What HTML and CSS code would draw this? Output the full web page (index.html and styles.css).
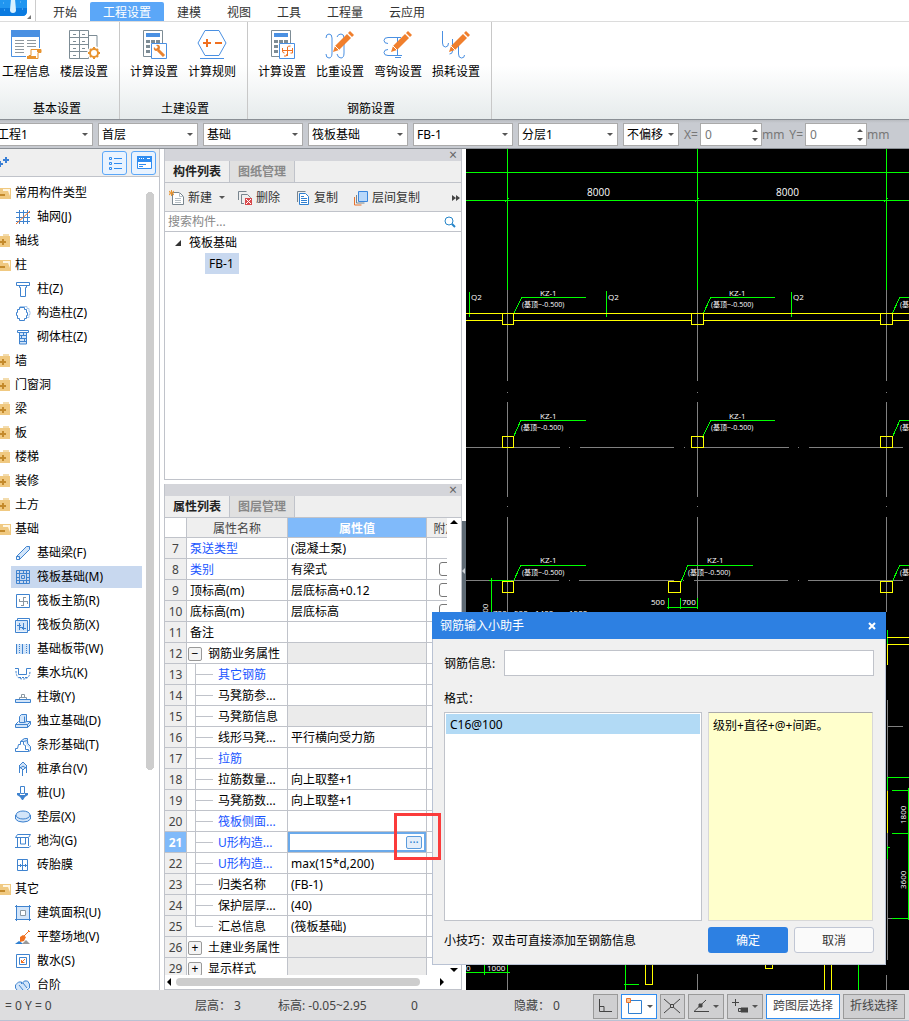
FILE: index.html
```html
<!DOCTYPE html>
<html lang="zh-CN">
<head>
    <meta charset="UTF-8">
    <meta name="viewport" content="width=device-width, initial-scale=1.0">
    <title>钢筋输入小助手</title>
    <link rel="stylesheet" href="styles.css">
</head>
<body>
    <!-- Shared icons -->
    <svg class="sprite" aria-hidden="true">
        <symbol id="folder" viewBox="0 0 16 16">
            <path d="M8 1h6v2H8z" fill="#f3dcae"/>
            <path d="M1 3h14v11H1z" fill="#f0c981"/>
            <path d="M5 9h6M8 6v6" stroke="#c48a2c" stroke-width="2"/>
        </symbol>
        <symbol id="folder-open" viewBox="0 0 16 16">
            <path d="M1 3h15v11H1z" fill="#f0c981"/>
            <path d="M8 4h7v7l-2-5H8z" fill="#fff6e2"/>
            <path d="M4 10h6" stroke="#c48a2c" stroke-width="2"/>
        </symbol>
        <symbol id="calc" viewBox="0 0 32 32">
            <path d="M5.500 2.500h19v26h-19z" fill="#fff" stroke="#7d8c95"/>
            <path d="M8 5h14v4H8z" fill="#4a90e2"/>
            <path d="M8 12h4v3H8zm5 0h4v3h-4zm5 0h4v3h-4zM8 17h4v3H8zm5 0h4v3h-4zM8 22h4v3H8z" fill="#7d8c95"/>
            <path d="M13.500 15.500h15v15h-15z" fill="#fff" stroke="#4a90e2"/>
        </symbol>
        <symbol id="pencil" viewBox="0 0 32 32">
            <path d="M9 24l2-6 12-12 4 4-12 12z" fill="#f07f2d"/>
            <path d="M24 5l2-2 4 4-2 2z" fill="#f07f2d"/>
            <path d="M11 18l4 4" stroke="#fff"/>
        </symbol>
    </svg>

    <nav class="menu">
        <span class="logo">
            <svg width="36" height="22" viewBox="0 0 36 22">
                <path d="M0 0h27v12q0 5-5 5H0z" fill="#2196f0"/>
                <path d="M0 9h27v3q0 5-5 5H0z" fill="#0b7be0"/>
                <path d="M11 0h4l1 11q0 3-3 3t-3-3z" fill="#d8f1ff"/>
                <path d="M3 4h1M20 3h1M22 10h1M4 11h1" stroke="#7fc8ff" stroke-width="1"/>
                <path d="M27 20h4v-4z" fill="#777"/>
            </svg>
        </span>
        <button class="menu-tab">开始</button>
        <button class="menu-tab active">工程设置</button>
        <button class="menu-tab">建模</button>
        <button class="menu-tab">视图</button>
        <button class="menu-tab">工具</button>
        <button class="menu-tab">工程量</button>
        <button class="menu-tab">云应用</button>
    </nav>

    <header class="ribbon">
        <section class="ribbon-group">
            <div class="ribbon-buttons">
                <button class="ribbon-btn">
                    <svg width="32" height="32" viewBox="0 0 32 32" fill="none">
                        <path d="M1.500 3.500h28v25h-28z" fill="#fff" stroke="#4a90e2"/>
                        <path d="M1 2h29v7H1z" fill="#4a90e2"/>
                        <path d="M5 12.500h9M5 15.500h9M5 18.500h9M5 21.500h9M5 24.500h9M17 12.500h9M17 15.500h9M17 18.500h9" stroke="#8d979e"/>
                        <path d="M18 20h14v12H16v-4h2z" fill="#fff"/>
                        <path d="M21 21.500h10v3h-3v6H18l1-3h2z" stroke="#e8932f"/>
                        <path d="M17 28h9v3h-9zM27 21h4v3h-4z" fill="#e8932f"/>
                    </svg>
                    工程信息
                </button>
                <button class="ribbon-btn">
                    <svg width="32" height="32" viewBox="0 0 32 32" fill="none">
                        <path d="M1.500 2.500h19v28h-19zM11.500 2v28M1 9.500h19M1 16.500h19M1 23.500h19M21 7.500h8v16" stroke="#7d8c95"/>
                        <path d="M5 6.500h3M14 6.500h3M5 13.500h3M14 13.500h3M5 20.500h3M14 20.500h3M5 27.500h3" stroke="#7d8c95"/>
                        <circle cx="26" cy="25" r="7" fill="#fff"/>
                        <circle cx="26" cy="25" r="4" stroke="#e8932f" stroke-width="2"/>
                        <path d="M26 19v2M26 29v2M20 25h2M30 25h2M22 21l1 1M29 28l1 1M30 21l-1 1M22 29l1-1" stroke="#e8932f" stroke-width="2"/>
                    </svg>
                    楼层设置
                </button>
            </div>
            <h2>基本设置</h2>
        </section>
        <section class="ribbon-group">
            <div class="ribbon-buttons">
                <button class="ribbon-btn">
                    <svg width="32" height="32" viewBox="0 0 32 32" fill="none">
                        <use href="#calc"/>
                        <path d="M20 22l6 6" stroke="#e8832f" stroke-width="3"/>
                        <path d="M16 19l2 2 2-2-2-2q4-1 4 3-1 3-4 3-3-1-2-4z" fill="#e8832f"/>
                    </svg>
                    计算设置
                </button>
                <button class="ribbon-btn">
                    <svg width="32" height="32" viewBox="0 0 32 32" fill="none">
                        <path d="M9 2.500h14l7 12.500-7 12.500H9L2 15z" fill="#fff" stroke="#4a90e2"/>
                        <path d="M4 30.500h24" stroke="#4a90e2"/>
                        <path d="M7 15h8M11 11v8M19 15h7" stroke="#f07020" stroke-width="2"/>
                    </svg>
                    计算规则
                </button>
            </div>
            <h2>土建设置</h2>
        </section>
        <section class="ribbon-group">
            <div class="ribbon-buttons">
                <button class="ribbon-btn">
                    <svg width="32" height="32" viewBox="0 0 32 32" fill="none">
                        <use href="#calc"/>
                        <path d="M21.500 28V19q0-1 3-1M16 22.500h11M18 28q3 1 3-2M16.500 20v3q0 2 2 2M26.500 20v5h-2" stroke="#f07020"/>
                    </svg>
                    计算设置
                </button>
                <button class="ribbon-btn">
                    <svg width="32" height="32" viewBox="0 0 32 32" fill="none">
                        <path d="M2 10q0-4 3-4t3 4v15q0 5-3 5t-3-4M13 9q1-3 4-3t3 4v15q0 5-3 5t-4-4" stroke="#4a90e2"/>
                        <use href="#pencil"/>
                    </svg>
                    比重设置
                </button>
                <button class="ribbon-btn">
                    <svg width="32" height="32" viewBox="0 0 32 32" fill="none">
                        <path d="M19 9.500H6q-4 0-4 3t4 3M20 27.500H6q-4 0-4-3t4-3M15.500 9v18M13 29.500h6" stroke="#4a90e2"/>
                        <use href="#pencil"/>
                    </svg>
                    弯钩设置
                </button>
                <button class="ribbon-btn">
                    <svg width="32" height="32" viewBox="0 0 32 32" fill="none">
                        <path d="M2.500 3v12q0 4 3 4t3-4M12.500 11v12q0 3-3 3M18.500 17v9q0 4 3 4t3-3" stroke="#4a90e2"/>
                        <use href="#pencil"/>
                    </svg>
                    损耗设置
                </button>
            </div>
            <h2>钢筋设置</h2>
        </section>
    </header>

    <div class="options">
        <select aria-label="工程"><option>工程1</option></select>
        <select aria-label="楼层"><option>首层</option></select>
        <select aria-label="构件大类"><option>基础</option></select>
        <select aria-label="构件类型"><option>筏板基础</option></select>
        <select aria-label="构件"><option>FB-1</option></select>
        <select aria-label="分层"><option>分层1</option></select>
        <select class="offset" aria-label="偏移"><option>不偏移</option></select>
        <label class="axis">X=<input type="number" value="0">mm</label>
        <label class="axis">Y=<input type="number" value="0">mm</label>
    </div>

    <main class="workspace">
        <aside class="sidebar">
            <div class="sidebar-tools">
                <svg class="pluses" width="10" height="14" viewBox="0 0 10 14">
                    <path d="M3 4h6M6 1v6M-2 8h5M0 5v6" stroke="#3a7fd5" stroke-width="2"/>
                </svg>
                <button class="view-btn" aria-label="列表">
                    <svg width="16" height="16" viewBox="0 0 16 16" fill="none" stroke="#2f8cf0">
                        <path d="M2.500 2.500h2v2h-2zM2.500 7.500h2v2h-2zM2.500 12.500h2v2h-2zM7 3.500h8M7 8.500h8M7 13.500h8"/>
                    </svg>
                </button>
                <button class="view-btn" aria-label="面板">
                    <svg width="16" height="16" viewBox="0 0 16 16" fill="none">
                        <path d="M1 2h15v12H1z" fill="#fff"/>
                        <path d="M1.500 2.500h14v11h-14zM3 9.500h7M3 11.500h4" stroke="#2f8cf0"/>
                        <path d="M1 1h15v6H1z" fill="#2f8cf0"/>
                        <path d="M3 3.500h1M5 3.500h1M7 3.500h1M11 3.500h3" stroke="#fff"/>
                    </svg>
                </button>
            </div>
            <ul class="types">
                <li class="group"><svg><use href="#folder-open"/></svg>常用构件类型</li>
                <li><svg viewBox="0 0 16 16"><path d="M1 3.500h14M1 8.500h14M1 12.500h14M4.500 1v14M8.500 1v14M12.500 1v14"/><path d="M1 15L15 2" class="orange"/></svg>轴网(J)</li>
                <li class="group"><svg><use href="#folder"/></svg>轴线</li>
                <li class="group"><svg><use href="#folder-open"/></svg>柱</li>
                <li><svg viewBox="0 0 16 16"><path d="M1.500 1.500h13v3h-13zM4.500 4.500v2h1v9h5v-9h1v-2"/></svg>柱(Z)</li>
                <li><svg viewBox="0 0 16 16"><path d="M5 3.500V1.500h7v2h2v3h1v3h-1v3h-2" class="soft"/><path d="M4.500 2.500h5v2h2v3h1v3h-1v3h-2v2h-5v-2h-2v-3h-1v-3h1v-3h2z"/></svg>构造柱(Z)</li>
                <li><svg viewBox="0 0 16 16"><path d="M4 4h8v11H4z" class="fill"/><path d="M2.500 1.500h11v2h-11zM4.500 4v11h7V4M5 6.500h7M5 9.500h7M5 12.500h7M8.500 4v2M6.500 7v2M9.500 10v2"/></svg>砌体柱(Z)</li>
                <li class="group"><svg><use href="#folder"/></svg>墙</li>
                <li class="group"><svg><use href="#folder"/></svg>门窗洞</li>
                <li class="group"><svg><use href="#folder"/></svg>梁</li>
                <li class="group"><svg><use href="#folder"/></svg>板</li>
                <li class="group"><svg><use href="#folder"/></svg>楼梯</li>
                <li class="group"><svg><use href="#folder"/></svg>装修</li>
                <li class="group"><svg><use href="#folder"/></svg>土方</li>
                <li class="group"><svg><use href="#folder-open"/></svg>基础</li>
                <li><svg viewBox="0 0 16 16"><path d="M1.500 11.500l10-10h3v3l-10 10z" class="fill"/><path d="M1.500 11.500l10-10h3v3l-10 10h-3zM1.500 11.500h3v3"/></svg>基础梁(F)</li>
                <li class="selected"><svg viewBox="0 0 16 16"><path d="M1.500 1.500h13v13h-13zM1 4.500h14M1 11.500h14M4.500 1v14M11.500 1v14M6.500 6.500h3v3h-3z"/><path d="M8.500 1v3M8.500 12v3M1 8.500h3M12 8.500h3"/></svg>筏板基础(M)</li>
                <li><svg viewBox="0 0 16 16"><path d="M1.500 1.500h13v13h-13z"/><path d="M8.500 4v8M4 8.500h9M8 4.500h3M9 12.500H6M4.500 9V6M12.500 8v3" class="grey"/></svg>筏板主筋(R)</li>
                <li><svg viewBox="0 0 16 16"><path d="M1.500 3.500h11v11h-11z" class="fill"/><path d="M.5 3.500h12v12H.5zM2.500 3V1.500h12v12H13M4.500 6v7M8.500 6v7M2 8.500h4M7 11.500h4M4 10.500h5"/></svg>筏板负筋(X)</li>
                <li><svg viewBox="0 0 16 16"><path d="M2 3h12v10H2z" class="fill"/><path d="M1.500 3v10M14.500 3v10M7.500 3v10"/><path d="M4.500 3v10M11.500 3v10" stroke-dasharray="1 1"/></svg>基础板带(W)</li>
                <li><svg viewBox="0 0 16 16"><path d="M0 3.500h3.500v6h8v-6H16"/><path d="M1 6q0 8 7 8t7-8M4 12.500h8" stroke-dasharray="2 1"/></svg>集水坑(K)</li>
                <li><svg viewBox="0 0 16 16"><path d="M.5 10.500h15v3H.5z" class="fill"/><path d="M.5 10.500h15v3H.5z"/><path d="M4.500 10V8.500h7V10M6.500 8V5.500h3V8" class="grey"/></svg>柱墩(Y)</li>
                <li><svg viewBox="0 0 16 16"><path d="M5 2l2-1h5v7l3 2v3l-2 2H1v-4l4-1z" class="fill"/><path d="M4.500 3.500l2-2h5v7l-2 1h-5zM9.500 3.500v6M.5 11.500h12v3H.5zM.5 11.500l3-3M12.500 11.500l3-3v3l-3 3M11.500 8.500h4"/></svg>独立基础(D)</li>
                <li><svg viewBox="0 0 16 16"><path d="M5 4l4-3h3l3 8v3l-3-3-3-5z" class="fill"/><path d="M.5 14.500v-3h2l1-4h2v-3h3v3l2 1v4h3v2zM5.500 4.500l4-3h3v2l-4 1M12.500 3.500v3l3 3v4l-2 1"/></svg>条形基础(T)</li>
                <li><svg viewBox="0 0 16 16"><path d="M8 1l4 4-4 4-4-4z" class="fill"/><path d="M8 1l4 4-4 4-4-4zM7.500 9v6M4.500 6v6M11.500 6v6M4 8l4-3 4 3"/></svg>桩承台(V)</li>
                <li><svg viewBox="0 0 16 16"><path d="M5.500 1.500h4v7h-4z"/><path d="M2 8h3v2h5V8h3v2l-3 2-2 3H7l-2-3-3-2z" fill="#3f83cf" stroke="none"/></svg>桩(U)</li>
                <li><svg viewBox="0 0 16 16"><path d="M.5 6.500v3q1 4 7.500 4t7.500-4v-3" class="fill"/><ellipse cx="8" cy="6" rx="7" ry="4" class="fill"/><ellipse cx="8" cy="6" rx="7" ry="4"/><path d="M.5 6v4q2 3 7.500 3t7.500-3V6"/></svg>垫层(X)</li>
                <li><svg viewBox="0 0 16 16"><path d="M.5 4.500l2-3h13l-2 3zM2.500 5v9M5.500 5v6h5V5M13.500 5v8M0 14.500h14l2-2"/></svg>地沟(G)</li>
                <li><svg viewBox="0 0 16 16"><path d="M2.500 2.500h10v11h-10zM2 8.500h11M7.500 2v11M5.500 7v3M10.500 7v3"/></svg>砖胎膜</li>
                <li class="group"><svg><use href="#folder-open"/></svg>其它</li>
                <li><svg viewBox="0 0 16 16"><path d="M2 2h12v12H2z" class="fill"/><path d="M1.500 0v16M14.500 0v16M0 1.500h16M0 14.500h16"/><path d="M5.500 5.500h5v5h-5z" class="grey" fill="#fff"/></svg>建筑面积(U)</li>
                <li><svg viewBox="0 0 16 16"><path d="M0 15l4-3 3 2 1 1z" fill="#2f7fd0" stroke="none"/><path d="M7 15l4-4 4 4z" fill="#999" stroke="none"/><path d="M5 8l3-2 3 2-2 4-4 1z" fill="#f07020" stroke="none"/><path d="M9 7l5-5M13 1l2 2" class="orange"/></svg>平整场地(V)</li>
                <li><svg viewBox="0 0 16 16"><path d="M1.500 1.500h13v13h-13zM4.500 4.500h7v7h-7z"/><path d="M10 6l-4 4M6.500 7v2.500h3" class="orange"/></svg>散水(S)</li>
                <li><svg viewBox="0 0 16 16"><path d="M1 8l3-3h3l3-2 4 3v4l-5 4H3l-2-3z" class="fill"/><path d="M.5 11V8l3-3h3v2l3-3h3l2 3v4l-5 4h-6zM4 8l4 5M8 6l4 5"/></svg>台阶</li>
            </ul>
        </aside>

        <div class="panels">
            <section class="panel components">
                <div class="panel-title"><button aria-label="关闭">×</button></div>
                <div class="panel-tabs">
                    <button class="active">构件列表</button>
                    <button>图纸管理</button>
                </div>
                <div class="panel-tools">
                    <button class="drop">
                        <svg width="16" height="16" viewBox="0 0 16 16" fill="none"><path d="M3.500 2.500h7l4 4v8h-11z" fill="#fff" stroke="#78858e"/><path d="M10.500 2v4.500h4M6 8.500h6M6 10.500h6M6 12.500h6" stroke="#b5bec4"/><path d="M0 1l5 4M5 1L0 5M2.500 0v6M0 3h5" stroke="#e8932f"/></svg>
                        新建
                    </button>
                    <button>
                        <svg width="16" height="16" viewBox="0 0 16 16" fill="none"><path d="M1.500 10V1.500h8M4.500 13V4.500h6l3 3V9M4 13.500h3" stroke="#78858e"/><path d="M8 8h7v7H8z" fill="#d8494c"/><path d="M9 9l5 5M14 9l-5 5" stroke="#fff"/></svg>
                        删除
                    </button>
                    <button>
                        <svg width="16" height="16" viewBox="0 0 16 16" fill="none"><path d="M2.500 12V1.500h8" stroke="#78858e"/><path d="M4.500 3.500h6l3 3v8h-9z" fill="#fff" stroke="#2f7fd0"/><path d="M6 6.500h3M6 8.500h6M6 10.500h6M6 12.500h6" stroke="#2f7fd0"/></svg>
                        复制
                    </button>
                    <button>
                        <svg width="16" height="16" viewBox="0 0 16 16" fill="none"><path d="M1.500 7v8h7" stroke="#e8732f"/><path d="M3.500 5v8h8" stroke="#78858e"/><path d="M5.500 1.500h9v10h-9z" fill="#b9d8fa" stroke="#3a86dd"/></svg>
                        层间复制
                    </button>
                    <span class="more"><svg width="8" height="8" viewBox="0 0 8 8"><path d="M0 1l4 3-4 3zM4 1l4 3-4 3z" fill="#444"/></svg></span>
                </div>
                <label class="search">
                    <input type="text" placeholder="搜索构件..." aria-label="搜索构件">
                    <svg width="12" height="12" viewBox="0 0 12 12" fill="none" stroke="#2585c9"><circle cx="5" cy="5" r="4"/><path d="M8 8l3 3" stroke-width="2"/></svg>
                </label>
                <div class="tree">
                    <div class="tree-root"><svg width="8" height="8" viewBox="0 0 8 8"><path d="M7 1v6H1z" fill="#333"/></svg>筏板基础</div>
                    <div class="tree-leaf">FB-1</div>
                </div>
            </section>

            <section class="panel properties">
                <div class="panel-title"><button aria-label="关闭">×</button></div>
                <div class="panel-tabs">
                    <button class="active">属性列表</button>
                    <button>图层管理</button>
                </div>
                <div class="table-area">
                    <div class="table-clip">
                        <table>
                            <thead>
                                <tr><th class="num"></th><th class="name">属性名称</th><th class="value">属性值</th><th class="extra">附加</th></tr>
                            </thead>
                            <tbody>
                                <tr><th>7</th><td class="blue">泵送类型</td><td>(混凝土泵)</td><td></td></tr>
                                <tr><th>8</th><td class="blue">类别</td><td>有梁式</td><td class="check"><input type="checkbox" aria-label="附加 类别"></td></tr>
                                <tr><th>9</th><td>顶标高(m)</td><td>层底标高+0.12</td><td class="check"><input type="checkbox" aria-label="附加 顶标高"></td></tr>
                                <tr><th>10</th><td>底标高(m)</td><td>层底标高</td><td class="check"><input type="checkbox" aria-label="附加 底标高"></td></tr>
                                <tr><th>11</th><td>备注</td><td></td><td></td></tr>
                                <tr><th>12</th><td class="parent"><button aria-label="收起">−</button>钢筋业务属性</td><td class="off"></td><td></td></tr>
                                <tr><th>13</th><td class="sub blue">其它钢筋</td><td></td><td></td></tr>
                                <tr><th>14</th><td class="sub">马凳筋参...</td><td></td><td></td></tr>
                                <tr><th>15</th><td class="sub">马凳筋信息</td><td class="off"></td><td></td></tr>
                                <tr><th>16</th><td class="sub">线形马凳...</td><td>平行横向受力筋</td><td></td></tr>
                                <tr><th>17</th><td class="sub blue">拉筋</td><td></td><td></td></tr>
                                <tr><th>18</th><td class="sub">拉筋数量...</td><td>向上取整+1</td><td></td></tr>
                                <tr><th>19</th><td class="sub">马凳筋数...</td><td>向上取整+1</td><td></td></tr>
                                <tr><th>20</th><td class="sub blue">筏板侧面...</td><td></td><td></td></tr>
                                <tr class="current"><th>21</th><td class="sub blue">U形构造...</td><td class="editing"><div class="editor"><input type="text" aria-label="U形构造封边钢筋"><button aria-label="钢筋输入">···</button></div></td><td></td></tr>
                                <tr><th>22</th><td class="sub blue">U形构造...</td><td>max(15*d,200)</td><td></td></tr>
                                <tr><th>23</th><td class="sub">归类名称</td><td>(FB-1)</td><td></td></tr>
                                <tr><th>24</th><td class="sub">保护层厚...</td><td>(40)</td><td></td></tr>
                                <tr><th>25</th><td class="sub last">汇总信息</td><td>(筏板基础)</td><td></td></tr>
                                <tr><th>26</th><td class="parent"><button aria-label="展开">+</button>土建业务属性</td><td class="off"></td><td></td></tr>
                                <tr><th>29</th><td class="parent"><button aria-label="展开">+</button>显示样式</td><td class="off"></td><td></td></tr>
                            </tbody>
                        </table>
                    </div>
                    <div class="v-scroll">
                        <svg width="8" height="5" viewBox="0 0 8 5"><path d="M0 4l4-4 4 4z"/></svg>
                        <svg width="8" height="5" viewBox="0 0 8 5"><path d="M0 0h8L4 4z"/></svg>
                    </div>
                </div>
                <div class="h-scroll">
                    <svg width="5" height="8" viewBox="0 0 5 8"><path d="M4 0v8L0 4z"/></svg>
                    <span class="thumb"></span>
                    <svg width="5" height="8" viewBox="0 0 5 8"><path d="M0 0v8l4-4z"/></svg>
                </div>
            </section>
        </div>

        <div class="splitter"><svg width="3" height="6" viewBox="0 0 3 6"><path d="M3 0v6L0 3z" fill="#cfd4d8"/></svg></div>

        <div class="drawing">
            <svg viewBox="466 149 443 841" preserveAspectRatio="xMinYMin slice">
                <!-- axes -->
                <path class="axis-line" d="M507 290v91M507 392v1M507 402v95M507 506v1M507 517v95M507 973v17M697 290v91M697 392v1M697 402v95M697 506v1M697 517v81M697 974v16M886 290v91M886 392v1M886 402v95M886 506v1M886 517v95M887 700v260M886 975v15"/>
                <path class="axis-line" d="M466 447h94M569 447h1M580 447h94M684 447h1M691 447h98M798 447h1M809 447h94M466 580h93M569 580h1M579 580h95M683 580h1M694 580h94M798 580h1M808 580h95M887 726h16M887 918h5"/>
                <!-- dimensions and leaders -->
                <path class="dim" d="M507 149v141M697 149v141M886 149v141M466 172h443M466 200h443M505 202l4-4M695 202l4-4M884 202l4-4"/>
                <path class="dim" d="M469 292v25M606 291v26M791 292v25M514 313l8-16h64M703 314l8-17h64M892 314l8-17h9M513 438l8-18h65M702 438l9-18h64M892 438l8-18h9M513 582l8-17h65M681 582l7-17h65M892 582l8-17h9"/>
                <path class="dim" d="M491 578v34M489 580h22M667 607h31M668 598v11M680 598v11M697 598v11M887 630v15M887 777h22M887 777v13M887 846v13M887 847h3M892 790h17M892 833h17M892 918h17M908 788v132"/>
                <path class="dim" d="M466 972h44M484 965v10M507 965v8M625 965v25M624 984h15M858 965v25"/>
                <!-- beams and columns -->
                <path class="beam" d="M466 313h36M514 313h177M704 313h176M893 313h16M466 320h36M514 320h177M704 320h176M893 320h16M887 637h22M887 644h22M887 645v20M887 791v42M645 965v19h7v-19M765 965v3h7v-3M824 965v25M831 965v25"/>
                <path class="beam" d="M502 313h11v11h-11zM691 313h12v11h-12zM880 313h12v11h-12zM502 436h11v11h-11zM691 436h12v11h-12zM880 436h12v11h-12zM502 581h11v11h-11zM668 581h12v11h-12zM880 581h12v11h-12z"/>
                <g class="big">
                    <text x="587" y="196">8000</text>
                    <text x="776" y="196">8000</text>
                </g>
                <g class="small">
                    <text x="471" y="300">Q2</text><text x="608" y="300">Q2</text><text x="793" y="300">Q2</text>
                    <text x="540" y="296">KZ-1</text><text x="729" y="296">KZ-1</text>
                    <text x="540" y="419">KZ-1</text><text x="729" y="419">KZ-1</text>
                    <text x="540" y="563">KZ-1</text><text x="707" y="563">KZ-1</text>
                    <text x="651" y="605">500</text><text x="682" y="605">700</text>
                    <text x="493" y="616">700</text><text x="514" y="616">500</text><text x="535" y="616">1400</text><text x="569" y="616">1500</text>
                    <text x="466" y="971">0</text><text x="487" y="971">1000</text>
                    <text transform="translate(488 622) rotate(-90)">3000</text>
                    <text transform="translate(906 824) rotate(-90)">1800</text>
                    <text transform="translate(906 889) rotate(-90)">3600</text>
                </g>
                <g class="level">
                    <text x="522" y="307">(基顶~-0.500)</text><text x="711" y="307">(基顶~-0.500)</text><text x="900" y="307">(基顶~-0.500)</text>
                    <text x="521" y="430">(基顶~-0.500)</text><text x="711" y="430">(基顶~-0.500)</text><text x="900" y="430">(基顶~-0.500)</text>
                    <text x="522" y="575">(基顶~-0.500)</text><text x="688" y="575">(基顶~-0.500)</text><text x="900" y="575">(基顶~-0.500)</text>
                </g>
            </svg>
        </div>

        <div class="dialog" role="dialog" aria-labelledby="dialogTitle">
            <div class="dialog-title">
                <span id="dialogTitle">钢筋输入小助手</span>
                <button aria-label="关闭"><svg width="10" height="10" viewBox="0 0 10 10"><path d="M2 2l6 6M8 2L2 8" stroke="#fff" stroke-width="2"/></svg></button>
            </div>
            <div class="dialog-body">
                <div class="field">
                    <label for="rebar">钢筋信息:</label>
                    <input type="text" id="rebar">
                </div>
                <p class="caption">格式：</p>
                <div class="formats">
                    <ul><li>C16@100</li></ul>
                    <div class="note">级别+直径+@+间距。</div>
                </div>
                <div class="dialog-foot">
                    <span>小技巧：双击可直接添加至钢筋信息</span>
                    <button class="ok">确定</button>
                    <button class="cancel">取消</button>
                </div>
            </div>
        </div>
        <div class="marker"></div>
    </main>

    <footer class="status">
        <div class="status-info">
            <span>= 0 Y = 0</span>
            <span>层高： 3</span>
            <span>标高: -0.05~2.95</span>
            <span>0</span>
            <span>隐藏： 0</span>
        </div>
        <button class="icon" aria-label="正交"><svg width="16" height="16" viewBox="0 0 16 16"><path d="M2.500 1v12.500H15M3 8.500h4v5"/></svg></button>
        <button class="icon drop on" aria-label="捕捉"><svg width="18" height="18" viewBox="0 0 18 18"><path d="M3.500 3.500h13v13h-13z" stroke="#2f7fd0"/><path d="M1.500 1.500h4v4h-4z" fill="#ffc58f" stroke="#e8732f"/></svg></button>
        <button class="icon" aria-label="交点"><svg width="16" height="16" viewBox="0 0 16 16"><path d="M0 1l16 14M16 1L0 15"/><path d="M6.500 6.500h3v3h-3z" fill="#ccc"/></svg></button>
        <button class="icon drop" aria-label="角度"><svg width="16" height="16" viewBox="0 0 16 16"><path d="M13 2L1 13.500h15"/><path d="M6 6h3v3H6z" fill="#444"/></svg></button>
        <button class="icon drop" aria-label="坐标"><svg width="16" height="16" viewBox="0 0 16 16"><path d="M0 4.500h7M3.500 1v7"/><path d="M6.500 10.500h9v3h-9z"/><path d="M9 10h7v4H9z" fill="#444"/></svg></button>
        <button class="on">跨图层选择</button>
        <button>折线选择</button>
    </footer>
</body>
</html>
```
FILE: styles.css
```css
* {
    box-sizing: border-box;
}

body {
    margin: 0;
    height: 100vh;
    display: flex;
    flex-direction: column;
    overflow: hidden;
    background: #fff;
    color: #000;
    font-family: "Noto Sans", "Noto Sans CJK SC", sans-serif;
    font-size: 12px;
    line-height: 16px;
}

button,
input,
select {
    font: inherit;
    color: inherit;
    margin: 0;
    padding: 0;
    border: 0;
    background: none;
    border-radius: 0;
}

ul,
p,
h2 {
    margin: 0;
    padding: 0;
    list-style: none;
}

svg {
    display: block;
    flex: none;
}

.sprite {
    position: absolute;
    width: 0;
    height: 0;
}

/* Menu */
.menu {
    display: flex;
    align-items: flex-end;
    height: 22px;
    flex: none;
    border-bottom: 1px solid #dcdcdc;
}

.logo {
    width: 40px;
    height: 22px;
    background: linear-gradient(#ccc, #ccc) 35px 0 / 1px 100% no-repeat, #fff;
}

.menu-tab {
    height: 19px;
    padding: 2px 13px 0;
    color: #333;
}

.menu-tab.active {
    background: #5ba7f8;
    color: #fff;
    border-radius: 2px 2px 0 0;
}

/* Ribbon */
.ribbon {
    display: flex;
    flex: none;
    height: 98px;
    background: linear-gradient(#fff 45%, #e6ebec);
    border-bottom: 1px solid #8a8f95;
}

.ribbon-group {
    display: flex;
    flex-direction: column;
    justify-content: space-between;
    padding: 6px 6px 2px 5px;
    border-right: 1px solid #c8c8c8;
}

.ribbon-group:first-child {
    margin-left: -8px;
}

.ribbon-buttons {
    display: flex;
}

.ribbon-btn {
    width: 58px;
    display: flex;
    flex-direction: column;
    align-items: center;
    gap: 4px;
}

.ribbon-group h2 {
    padding-left: 4px;
    font-size: 12px;
    font-weight: normal;
    text-align: center;
}

/* Option bar */
.options {
    display: flex;
    align-items: center;
    gap: 5px;
    flex: none;
    height: 29px;
    padding-top: 1px;
    background: linear-gradient(#b9bcc1, #c8cbd1 3px);
    border-bottom: 1px solid #8a8f95;
}

.options select {
    appearance: none;
    width: 100px;
    height: 23px;
    padding: 0 4px 0 3px;
    border: 1px solid #aaa;
    background: #fff url("data:image/svg+xml,%3Csvg xmlns='http://www.w3.org/2000/svg' width='6' height='3'%3E%3Cpath d='M0 0h6L3 3z' fill='%23555'/%3E%3C/svg%3E") right 4px center no-repeat;
}

.options select:first-child {
    margin-left: -7px;
}

.options .offset {
    width: 56px;
}

.axis {
    display: flex;
    align-items: center;
    color: #777;
}

.axis input {
    appearance: textfield;
    width: 62px;
    height: 23px;
    padding-left: 4px;
    margin-left: 2px;
    border: 1px solid #aaa;
    background: #fff url("data:image/svg+xml,%3Csvg xmlns='http://www.w3.org/2000/svg' width='6' height='12'%3E%3Cpath d='M0 3h6L3 0zM0 9h6l-3 3z' fill='%23555'/%3E%3C/svg%3E") right 3px center no-repeat;
}

.axis input::-webkit-inner-spin-button {
    appearance: none;
}

/* Workspace */
.workspace {
    position: relative;
    display: flex;
    flex: 1;
    min-height: 0;
}

.sidebar {
    display: flex;
    flex-direction: column;
    width: 160px;
    flex: none;
    border-right: 1px solid #c0c3ca;
}

.sidebar-tools {
    display: flex;
    align-items: center;
    gap: 4px;
    height: 28px;
    flex: none;
    padding-right: 3px;
    background: #efefef;
    border-bottom: 1px solid #c0c3ca;
}

.pluses {
    margin-right: auto;
}

.view-btn {
    width: 25px;
    height: 24px;
    display: flex;
    align-items: center;
    justify-content: center;
    border: 1px solid #5ba7f8;
    border-radius: 3px;
    background: #e9f3ff;
}

.types {
    flex: 1;
    overflow: hidden;
    padding: 5px 17px 0 0;
    background: radial-gradient(circle at 4px 4px, #cdcdcd 4px, transparent 4px) right 5px top 15px / 8px 4px no-repeat,
        linear-gradient(#cdcdcd, #cdcdcd) right 5px top 19px / 8px 570px no-repeat,
        radial-gradient(circle at 4px 0, #cdcdcd 4px, transparent 4px) right 5px top 589px / 8px 4px no-repeat;
}

.types li {
    display: flex;
    align-items: center;
    gap: 6px;
    height: 22px;
    margin: 0 0 2px 11px;
    padding-left: 4px;
    white-space: nowrap;
}

.types li.group {
    margin-left: -5px;
    padding-left: 0;
    gap: 4px;
}

.types li.selected {
    background: #c8d8ef;
}

.types svg {
    width: 16px;
    height: 16px;
    fill: none;
    stroke: #3f83cf;
}

.types .group svg {
    stroke: none;
}

.types .fill {
    fill: #d3e5f9;
    stroke: none;
}

.types .orange {
    stroke: #f07020;
}

.types .soft {
    stroke: #a9c9ec;
}

.types .grey {
    stroke: #8b98a2;
}

/* Middle panels */
.panels {
    display: flex;
    flex-direction: column;
    gap: 4px;
    width: 298px;
    flex: none;
    margin-left: 4px;
}

.panel {
    display: flex;
    flex-direction: column;
    border: 1px solid #c0c3ca;
    border-top: 0;
    min-height: 0;
}

.components {
    flex: 331;
}

.properties {
    flex: 506;
}

.panel-title {
    display: flex;
    justify-content: flex-end;
    align-items: center;
    height: 12px;
    flex: none;
    padding-right: 4px;
    background: #d4d5da;
}

.panel-title button {
    font-size: 14px;
    line-height: 12px;
    color: #666;
}

.panel-tabs {
    display: flex;
    height: 22px;
    flex: none;
    background: #efefef;
    border-bottom: 1px solid #c0c3ca;
}

.panel-tabs button {
    padding: 1px 8px 0;
    font-weight: bold;
    color: #888;
    background: #e0e0e0;
    border-right: 1px solid #c0c3ca;
}

.panel-tabs .active {
    color: #222;
    background: #efefef;
}

.panel-tools {
    display: flex;
    align-items: center;
    gap: 15px;
    height: 29px;
    flex: none;
    padding: 1px 1px 0 4px;
    background: #efefef;
    border-bottom: 1px solid #c0c3ca;
}

.panel-tools button {
    display: flex;
    align-items: center;
    gap: 3px;
    color: #333;
}

.panel-tools .drop {
    margin-right: -3px;
}

.drop::after {
    content: '';
    border: 3px solid transparent;
    border-top-color: #555;
    border-bottom: 0;
    margin-left: 4px;
}

.more {
    margin-left: auto;
}

.search {
    display: flex;
    align-items: center;
    height: 20px;
    flex: none;
    padding: 1px 5px 0 3px;
    background: #fff;
    border-bottom: 1px solid #c0c3ca;
}

.search input {
    flex: 1;
    outline: 0;
}

.search input::placeholder {
    color: #888;
}

.tree {
    line-height: 21px;
}

.tree-root {
    display: flex;
    align-items: center;
    gap: 7px;
    padding-left: 9px;
}

.tree-leaf {
    width: max-content;
    margin-left: 40px;
    padding: 0 5px 0 4px;
    background: #c8d8ef;
}

/* Property table */
.table-area {
    display: flex;
    flex: 1;
    min-height: 0;
}

.table-clip {
    flex: 1;
    overflow: hidden;
}

table {
    width: 300px;
    table-layout: fixed;
    border-collapse: separate;
    border-spacing: 0;
}

th,
td {
    height: 21px;
    padding: 2px 0 0 3px;
    border-right: 1px solid #c0c3ca;
    border-bottom: 1px solid #c0c3ca;
    font-weight: normal;
    text-align: left;
    white-space: nowrap;
}

th {
    padding-left: 0;
    background: #efefef;
    color: #444;
    text-align: center;
}

thead th {
    height: 20px;
}

.num {
    width: 22px;
    background: #fff;
}

.name {
    width: 101px;
}

.value {
    width: 139px;
    background: #80bafa;
    color: #fff;
    font-weight: bold;
}

.extra {
    width: 38px;
}

.blue {
    color: #1a56ff;
}

.off {
    background: #ebebeb;
}

.check {
    padding: 0;
    text-align: center;
}

.check input {
    appearance: none;
    display: block;
    width: 14px;
    height: 14px;
    margin: 0 auto;
    border: 1px solid #777;
    border-radius: 3px;
}

.parent {
    padding: 1px 0 0 1px;
}

.parent button {
    width: 14px;
    height: 14px;
    margin-right: 6px;
    line-height: 12px;
    vertical-align: middle;
    border: 1px solid #999;
    border-radius: 2px;
    background: #f4f4f4;
}

.sub {
    padding-left: 31px;
    background: linear-gradient(#c0c3ca, #c0c3ca) 8px 0 / 1px 100% no-repeat, linear-gradient(#c0c3ca, #c0c3ca) 8px 10px / 18px 1px no-repeat;
}

.sub.last {
    background-size: 1px 10px, 18px 1px;
}

.current th {
    background: #80bafa;
    color: #fff;
    font-weight: bold;
}

.editing {
    padding: 0;
}

.editor {
    display: flex;
    align-items: center;
    height: 20px;
    padding-right: 2px;
    border: 2px solid #6aa9ea;
}

.editor input {
    flex: 1;
    min-width: 0;
    outline: 0;
}

.editor button {
    width: 16px;
    height: 13px;
    line-height: 11px;
    color: #2f7fd0;
    border: 1px solid #5b9bdc;
    border-radius: 2px;
    background: #e4eefa;
}

.v-scroll {
    width: 14px;
    display: flex;
    flex-direction: column;
    justify-content: space-between;
    align-items: center;
    padding: 2px 0;
}

.h-scroll {
    display: flex;
    align-items: center;
    gap: 4px;
    height: 14px;
    flex: none;
    padding: 0 16px 0 2px;
}

.thumb {
    flex: 1;
    height: 8px;
    margin-right: 16px;
    border-radius: 4px;
    background: #cdcdcd;
}

.splitter {
    display: flex;
    align-items: center;
    width: 4px;
    height: 100px;
    flex: none;
    margin-top: 372px;
    background: #5f6b75;
}

/* Drawing */
.drawing {
    flex: 1;
    min-width: 0;
    background: #000;
    overflow: hidden;
}

.drawing svg {
    width: 100%;
    height: 100%;
    fill: none;
}

.drawing path {
    shape-rendering: crispEdges;
}

.axis-line {
    stroke: #808080;
}

.dim {
    stroke: #0f0;
}

.beam {
    stroke: #ff0;
}

.drawing text {
    fill: #fff;
    font-family: "Open Sans", "Noto Sans CJK SC", sans-serif;
}

.big {
    font-size: 10px;
}

.small {
    font-size: 8px;
}

.level {
    font-size: 7px;
}

/* Dialog */
.dialog {
    position: absolute;
    top: 463px;
    left: 432px;
    width: 454px;
    background: #f0f0f0;
    border: 1px solid #b9c2d3;
    border-top: 0;
}

.dialog-title {
    display: flex;
    align-items: center;
    justify-content: space-between;
    height: 27px;
    margin: 0 -1px;
    padding: 0 9px 0 8px;
    background: #2d80e2;
    color: #fff;
}

.dialog-body {
    padding: 11px;
}

.field {
    display: flex;
    align-items: center;
    gap: 9px;
}

.field label {
    padding-top: 2px;
}

.field input {
    flex: 1;
    height: 26px;
    border: 1px solid #c0c3ca;
    background: #fff;
}

.caption {
    padding: 15px 0 5px;
}

.formats {
    display: grid;
    grid-template-columns: 1fr 166px;
    gap: 6px;
    height: 209px;
}

.formats ul {
    padding: 1px;
    border: 1px solid #c0c3ca;
    background: #fff;
}

.formats li {
    height: 20px;
    padding: 3px 4px 0;
    background: #b2daf5;
}

.note {
    margin-right: 1px;
    padding: 5px 4px;
    border: 1px solid #d8d8d8;
    border-top-color: #aaa;
    background: #ffffcc;
}

.dialog-foot {
    display: flex;
    align-items: center;
    gap: 6px;
    margin-top: 6px;
}

.dialog-foot span {
    flex: 1;
    padding-top: 2px;
}

.dialog-foot button {
    width: 80px;
    height: 26px;
    padding-top: 2px;
    border-radius: 3px;
}

.ok {
    background: #2d80e2;
    color: #fff;
}

.dialog-foot .cancel {
    border: 1px solid #c0c6d4;
    background: #fafafa;
    color: #333;
}

.marker {
    position: absolute;
    top: 664px;
    left: 394px;
    width: 47px;
    height: 47px;
    border: 3px solid #fb3b3b;
}

/* Status bar */
.status {
    display: flex;
    align-items: center;
    gap: 3px;
    height: 31px;
    flex: none;
    padding: 2px 4px 0 5px;
    background: #dddddf;
    border-bottom: 1px solid #b9c2d3;
    color: #444;
}

.status-info {
    flex: 1;
    display: grid;
    grid-template-columns: 190px 83px 133px 103px 1fr;
    white-space: nowrap;
}

.status button {
    display: flex;
    align-items: center;
    justify-content: center;
    height: 25px;
    padding: 0 6px;
    border: 1px solid #999;
    background: #cfcfd1;
    white-space: nowrap;
}

.status .icon {
    width: 25px;
    padding: 0;
}

.status .icon.drop {
    width: 36px;
}

.status .on {
    border-color: #2f8cf0;
    background: #fff;
}

.status svg {
    fill: none;
    stroke: #444;
}
```
